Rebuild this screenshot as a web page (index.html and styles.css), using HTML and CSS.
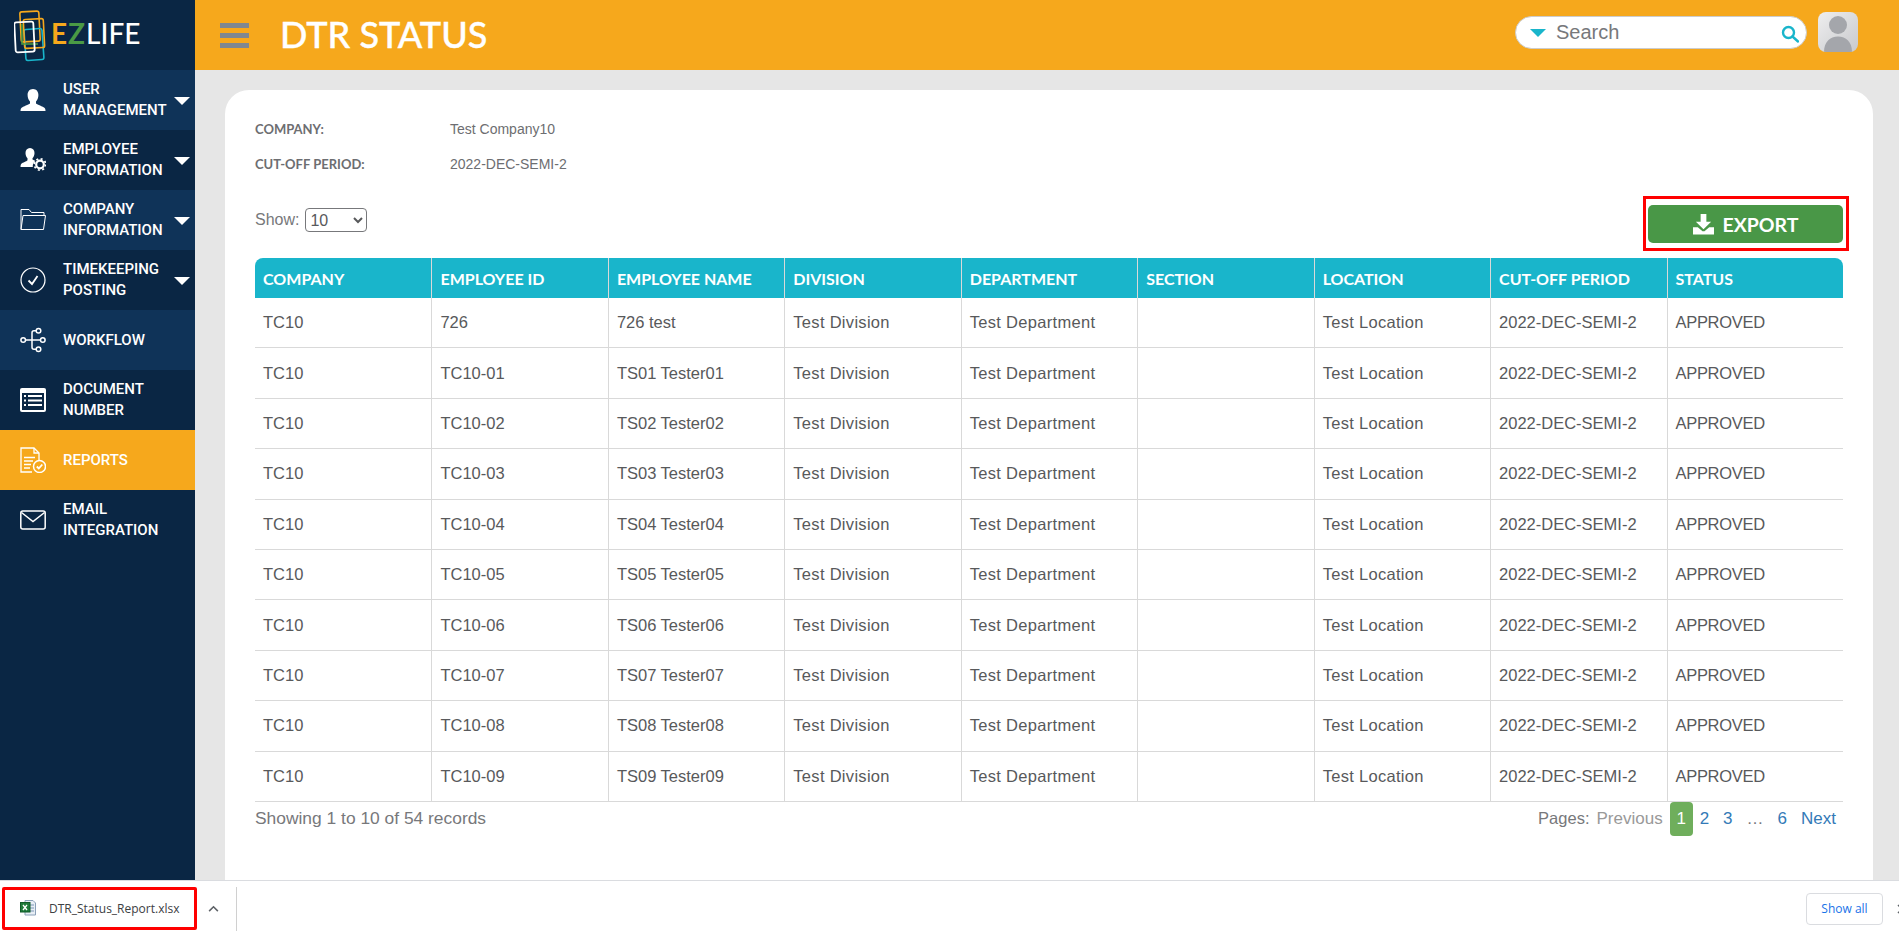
FILE: index.html
```html
<!DOCTYPE html>
<html lang="en">
<head>
<meta charset="utf-8">
<title>DTR Status</title>
<link rel="stylesheet" href="styles.css">
</head>
<body>
<div class="app">
  <aside class="sidebar">
    <div class="logo">
      <svg class="logo-mark" viewBox="0 0 36 52" width="36" height="52" fill="none" stroke-width="1.6">
        <rect x="6.500" y="1.500" width="19" height="30" rx="2" stroke="#f6a81c" transform="rotate(-3 16 16)"/>
        <rect x="11" y="19" width="18" height="31" rx="2" stroke="#19b5cb" transform="rotate(-4 20 35)"/>
        <rect x="10" y="9" width="20" height="29" rx="2" stroke="#f6a81c" transform="rotate(-3 20 24)"/>
        <path d="M8 14v20h16" stroke="#4a9a45"/>
        <rect x="1" y="12" width="19" height="30" rx="2" stroke="#fff" stroke-width="1.8" transform="rotate(-3 10 27)"/>
      </svg>
      <span class="logo-text"><span class="logo-e">E</span><span class="logo-z">Z</span>LIFE</span>
    </div>
    <nav class="nav">
      <a class="nav-item alt">
        <svg class="nav-icon" viewBox="0 0 26 26"><path d="M13 2c3.600 0 5.400 2.800 5.400 6 0 2.600-1 5-2.400 6.400v1.800c0 1 5 2.400 8 4.200 1 .6 1.500 1.600 1.500 3.600H.5c0-2 .5-3 1.500-3.600 3-1.800 8-3.200 8-4.200v-1.800C8.600 13 7.600 10.600 7.600 8c0-3.200 1.800-6 5.400-6z" fill="#fff"/></svg>
        <span class="nav-label">USER<br>MANAGEMENT</span><span class="caret"></span>
      </a>
      <a class="nav-item">
        <svg class="nav-icon" viewBox="0 0 26 26"><path d="M10 1c2.900 0 4.500 2.200 4.500 5 0 2-.8 4-2 5.200v1.300c1 .5 2 .9 3 1.400-2 1.200-3 3.300-2.700 6.100H.5c0-2.400.5-3.200 1.500-3.800 2-1.200 5.500-2.300 5.500-3.300v-1.700C6.300 10 5.500 8 5.500 6c0-2.800 1.600-5 4.500-5z" fill="#fff"/><circle cx="20" cy="17.500" r="3.800" fill="none" stroke="#fff" stroke-width="2.200"/><circle cx="20" cy="17.500" r="5.700" fill="none" stroke="#fff" stroke-width="1.800" stroke-dasharray="2 2.470"/></svg>
        <span class="nav-label">EMPLOYEE<br>INFORMATION</span><span class="caret"></span>
      </a>
      <a class="nav-item alt">
        <svg class="nav-icon" viewBox="0 0 26 26" fill="none" stroke="#fff" stroke-width="1"><path d="M1 22.500V2.500h8l2.500 3H24v3"/><path d="M1 22.500 3 8.500h22.500L23.500 22.500z"/></svg>
        <span class="nav-label">COMPANY<br>INFORMATION</span><span class="caret"></span>
      </a>
      <a class="nav-item">
        <svg class="nav-icon" viewBox="0 0 26 26" fill="none" stroke="#fff"><circle cx="13" cy="13" r="12" stroke-width="1.200"/><path d="M8.500 13.500 12 17l5.500-8" stroke-width="1.800"/></svg>
        <span class="nav-label">TIMEKEEPING<br>POSTING</span><span class="caret"></span>
      </a>
      <a class="nav-item alt">
        <svg class="nav-icon" viewBox="0 0 26 26" fill="none" stroke="#fff" stroke-width="1.500"><circle cx="3.200" cy="13" r="2.300"/><circle cx="18.500" cy="3.800" r="2.300"/><circle cx="22.800" cy="13" r="2.300"/><circle cx="18.500" cy="22.200" r="2.300"/><path d="M5.500 13h15M16.200 3.800h-2.200a2 2 0 0 0-2 2v14.400a2 2 0 0 0 2 2h2.200"/></svg>
        <span class="nav-label">WORKFLOW</span>
      </a>
      <a class="nav-item">
        <svg class="nav-icon" viewBox="0 0 26 26"><rect x="0" y="1" width="26" height="24" rx="2" fill="#fff"/><rect x="2" y="6" width="22" height="17" fill="#0a2644"/><path d="M4 9h2M8 9h14M4 13.500h2M8 13.500h14M4 18h2M8 18h14" stroke="#fff" stroke-width="1.800"/></svg>
        <span class="nav-label">DOCUMENT<br>NUMBER</span>
      </a>
      <a class="nav-item active">
        <svg class="nav-icon" viewBox="0 0 26 26" fill="none" stroke="#fff" stroke-width="1.300"><path d="M12 25H1V1h13l5 5v8"/><path d="M14 1v5h5"/><path d="M4 10.500h11M4 14h9M4 17.500h7M4 21h6"/><circle cx="19.500" cy="19.500" r="6" fill="#f6a81c" stroke-width="1.500"/><path d="M16.800 19.500l2 2 3.500-4" stroke-width="1.800"/></svg>
        <span class="nav-label">REPORTS</span>
      </a>
      <a class="nav-item">
        <svg class="nav-icon" viewBox="0 0 26 26" fill="none" stroke="#fff" stroke-width="1.500"><rect x=".8" y="4" width="24.400" height="18" rx="2"/><path d="M1.500 5.500 13 14.500 24.500 5.500"/></svg>
        <span class="nav-label">EMAIL<br>INTEGRATION</span>
      </a>
    </nav>
  </aside>

  <div class="main">
    <header class="topbar">
      <div class="hamburger"><i></i><i></i><i></i></div>
      <h1 class="title">DTR STATUS</h1>
      <div class="search">
        <span class="search-caret"></span>
        <span class="search-text">Search</span>
        <svg class="search-icon" viewBox="0 0 18 18" width="18" height="18" fill="none" stroke="#19b5cb" stroke-width="2.400"><circle cx="7.500" cy="7.500" r="5.500"/><path d="M11.500 11.500 17 16.500" stroke-linecap="round"/></svg>
      </div>
      <div class="avatar">
        <svg viewBox="0 0 40 40" width="40" height="40"><circle cx="20" cy="13" r="9" fill="#a4a6ab"/><path d="M6 40c0-10 6-15.500 14-15.500S34 30 34 40z" fill="#a4a6ab"/></svg>
      </div>
    </header>

    <main class="content">
      <section class="card">
        <dl class="info">
          <div class="info-row"><dt>COMPANY:</dt><dd>Test Company10</dd></div>
          <div class="info-row"><dt>CUT-OFF PERIOD:</dt><dd>2022-DEC-SEMI-2</dd></div>
        </dl>
        <div class="toolbar">
          <label class="show">Show:
            <select class="show-select"><option>10</option></select>
          </label>
          <div class="export-mark">
            <button class="export">
              <svg viewBox="0 0 22 22" width="21" height="21"><path d="M8 0h6v8h5l-8 8-8-8h5z" fill="#fff"/><path d="M0 14h5l5 4h2l5-4h5v7.500H0z" fill="#fff"/></svg>
              EXPORT
            </button>
          </div>
        </div>
        <table class="grid">
          <thead>
            <tr><th>COMPANY</th><th>EMPLOYEE ID</th><th>EMPLOYEE NAME</th><th>DIVISION</th><th>DEPARTMENT</th><th>SECTION</th><th>LOCATION</th><th>CUT-OFF PERIOD</th><th>STATUS</th></tr>
          </thead>
          <tbody>
            <tr><td>TC10</td><td>726</td><td>726 test</td><td>Test Division</td><td>Test Department</td><td></td><td>Test Location</td><td>2022-DEC-SEMI-2</td><td>APPROVED</td></tr>
            <tr><td>TC10</td><td>TC10-01</td><td>TS01 Tester01</td><td>Test Division</td><td>Test Department</td><td></td><td>Test Location</td><td>2022-DEC-SEMI-2</td><td>APPROVED</td></tr>
            <tr><td>TC10</td><td>TC10-02</td><td>TS02 Tester02</td><td>Test Division</td><td>Test Department</td><td></td><td>Test Location</td><td>2022-DEC-SEMI-2</td><td>APPROVED</td></tr>
            <tr><td>TC10</td><td>TC10-03</td><td>TS03 Tester03</td><td>Test Division</td><td>Test Department</td><td></td><td>Test Location</td><td>2022-DEC-SEMI-2</td><td>APPROVED</td></tr>
            <tr><td>TC10</td><td>TC10-04</td><td>TS04 Tester04</td><td>Test Division</td><td>Test Department</td><td></td><td>Test Location</td><td>2022-DEC-SEMI-2</td><td>APPROVED</td></tr>
            <tr><td>TC10</td><td>TC10-05</td><td>TS05 Tester05</td><td>Test Division</td><td>Test Department</td><td></td><td>Test Location</td><td>2022-DEC-SEMI-2</td><td>APPROVED</td></tr>
            <tr><td>TC10</td><td>TC10-06</td><td>TS06 Tester06</td><td>Test Division</td><td>Test Department</td><td></td><td>Test Location</td><td>2022-DEC-SEMI-2</td><td>APPROVED</td></tr>
            <tr><td>TC10</td><td>TC10-07</td><td>TS07 Tester07</td><td>Test Division</td><td>Test Department</td><td></td><td>Test Location</td><td>2022-DEC-SEMI-2</td><td>APPROVED</td></tr>
            <tr><td>TC10</td><td>TC10-08</td><td>TS08 Tester08</td><td>Test Division</td><td>Test Department</td><td></td><td>Test Location</td><td>2022-DEC-SEMI-2</td><td>APPROVED</td></tr>
            <tr><td>TC10</td><td>TC10-09</td><td>TS09 Tester09</td><td>Test Division</td><td>Test Department</td><td></td><td>Test Location</td><td>2022-DEC-SEMI-2</td><td>APPROVED</td></tr>
          </tbody>
        </table>
        <div class="table-foot">
          <span class="records">Showing 1 to 10 of 54 records</span>
          <div class="pager">
            <span class="pager-label">Pages:</span>
            <span class="pager-off">Previous</span>
            <span class="pager-now">1</span>
            <a class="pager-link">2</a>
            <a class="pager-link">3</a>
            <span class="pager-dots">…</span>
            <a class="pager-link">6</a>
            <a class="pager-link">Next</a>
          </div>
        </div>
      </section>
    </main>
  </div>
</div>

<footer class="downloads">
  <div class="dl-item">
    <svg class="dl-icon" viewBox="0 0 16 16" width="16" height="16"><path d="M5 .5h8l2.500 2.500v12H5z" fill="#e8eef5" stroke="#8aa0b8"/><path d="M9 5h5M9 8h5M9 11h5" stroke="#7a96b5"/><rect x=".5" y="2.500" width="9.500" height="9.500" fill="#1f7a3a" stroke="#0f5a28"/><path d="M3 5l4 5M7 5l-4 5" stroke="#fff" stroke-width="1.300"/></svg>
    <span class="dl-name">DTR_Status_Report.xlsx</span>
  </div>
  <svg class="dl-chevron" viewBox="0 0 12 8" width="11" height="7" fill="none" stroke="#5f6368" stroke-width="1.800"><path d="M1 7l5-5 5 5"/></svg>
  <span class="dl-divider"></span>
  <button class="show-all">Show all</button>
  <svg class="dl-close" viewBox="0 0 10 10" width="10" height="10" fill="none" stroke="#5f6368" stroke-width="1.500"><path d="M1 1l8 8M9 1l-8 8"/></svg>
</footer>
</body>
</html>
```

FILE: styles.css
```css
* { box-sizing: border-box; }
html, body { margin: 0; height: 100%; overflow: hidden; }
body {
  display: flex;
  flex-direction: column;
  height: 936px;
  font-family: "Liberation Sans", Arial, sans-serif;
  color: #58595b;
  background: #fff;
}
.app { display: flex; height: 880px; }

/* sidebar */
.sidebar { width: 195px; flex: none; background: #0a2644; }
.logo { height: 70px; display: flex; align-items: center; padding: 2px 0 0 14px; }
.logo-mark { flex: none; margin-top: -1px; }
.logo-text {
  font-family: Lato, sans-serif;
  font-size: 28px;
  line-height: 1;
  color: #fff;
  font-weight: 500;
  margin-left: 1px;
  margin-top: -7px;
}
.logo-e { color: #f6a81c; font-weight: 700; margin-right: 1px; }
.logo-z { color: #4a9a45; font-weight: 700; margin-right: 1px; }
.nav { display: flex; flex-direction: column; }
.nav-item {
  height: 60px;
  display: flex;
  align-items: center;
  padding-left: 20px;
  color: #fff;
  background: #0a2644;
  position: relative;
}
.nav-item.alt { background: #0f3358; }
.nav-item.active { background: #f6a81c; }
.nav-icon { width: 26px; height: 26px; flex: none; }
.nav-label {
  margin-left: 17px;
  font-family: Roboto, sans-serif;
  font-size: 15px;
  font-weight: 500;
  line-height: 21px;
}
.caret {
  position: absolute;
  right: 5px;
  top: 27px;
  width: 0;
  height: 0;
  border-left: 8px solid transparent;
  border-right: 8px solid transparent;
  border-top: 8px solid #fff;
}

/* top bar */
.main { flex: 1; display: flex; flex-direction: column; min-width: 0; background: #e6e6e6; }
.topbar {
  height: 70px;
  flex: none;
  background: #f6a81c;
  display: flex;
  align-items: center;
  padding-left: 25px;
}
.hamburger { width: 29px; display: flex; flex-direction: column; gap: 5px; }
.hamburger i { display: block; height: 5px; background: #7f8790; }
.title {
  margin: -2px 0 0 31px;
  font-family: Lato, sans-serif;
  font-size: 36px;
  font-weight: 500;
  color: #fff;
  -webkit-text-stroke: .4px #fff;
}
.search {
  margin-left: auto;
  width: 292px;
  height: 33px;
  margin-top: -5px;
  background: #fff;
  border: 1px solid #ccc;
  border-radius: 17px;
  display: flex;
  align-items: center;
  padding: 0 7px 0 14px;
}
.search-caret {
  width: 0;
  height: 0;
  border-left: 8px solid transparent;
  border-right: 8px solid transparent;
  border-top: 8px solid #19b5cb;
  flex: none;
}
.search-text { margin-left: 10px; font-size: 20px; color: #77787b; }
.search-icon { margin-left: auto; margin-top: 2px; }
.avatar {
  width: 40px;
  height: 40px;
  margin: -6px 41px 0 11px;
  border-radius: 8px;
  overflow: hidden;
  background: linear-gradient(135deg, #eeeeef, #c8c9cc);
}
.avatar svg { display: block; }

/* card */
.content { flex: 1; padding: 20px 26px 0 30px; min-height: 0; }
.card {
  height: 100%;
  background: #fff;
  border-radius: 24px 24px 0 0;
  padding: 21px 30px 0 30px;
}
.info { margin: 0; }
.info-row { display: flex; align-items: center; height: 35px; font-size: 14px; color: #6d6e71; }
.info-row dt { width: 195px; font-family: Lato, sans-serif; font-weight: 700; font-size: 13px; }
.info-row dd { margin: 0; }
.toolbar { display: flex; justify-content: space-between; align-items: flex-start; margin-top: 17px; height: 50px; }
.show { font-size: 16px; color: #77787b; margin-top: 10px; display: flex; align-items: center; gap: 6px; }
.show-select {
  width: 62px;
  height: 24px;
  font-size: 16px;
  font-family: "Liberation Sans", sans-serif;
  color: #58595b;
  background: #fff;
  border: 1px solid #77787b;
  border-radius: 4px;
}
.export-mark { border: 3px solid #f00; padding: 6px 3px 5px 2px; margin: -2px -6px 0 0; }
.export {
  width: 195px;
  height: 38px;
  display: flex;
  align-items: center;
  justify-content: center;
  gap: 9px;
  background: #499747;
  color: #fff;
  border: 0;
  border-radius: 5px;
  font-family: Lato, sans-serif;
  font-size: 19.500px;
  font-weight: 700;
}

/* table */
.grid { width: 100%; table-layout: fixed; border-collapse: separate; border-spacing: 0; font-size: 16.500px; margin-top: 10px; }
.grid th {
  height: 40px;
  padding: 0 8px;
  background: #19b5cb;
  color: #fff;
  font-family: Lato, sans-serif;
  font-size: 16px;
  font-weight: 700;
  text-align: left;
  border-left: 1px solid #d9d9d9;
}
.grid th:first-child { border-left: 0; border-top-left-radius: 8px; }
.grid th:last-child { border-top-right-radius: 8px; }
.grid td {
  height: 50.400px;
  padding: 0 8px;
  color: #58595b;
  border-left: 1px solid #d9d9d9;
  border-bottom: 1px solid #d9d9d9;
}
.grid td:first-child { border-left: 0; }
.grid td:nth-child(4), .grid td:nth-child(5), .grid td:nth-child(7) { letter-spacing: .3px; }
.grid td:last-child { letter-spacing: -.3px; }
.table-foot { display: flex; justify-content: space-between; align-items: flex-start; }
.records { font-size: 17.400px; color: #77787b; margin-top: 6px; }
.pager { display: flex; align-items: center; height: 34px; font-size: 17px; }
.pager-label { color: #77787b; font-size: 16.500px; }
.pager-off { color: #999; padding: 0 7px; }
.pager-now {
  width: 23px;
  height: 34px;
  display: flex;
  align-items: center;
  justify-content: center;
  background: #6fae5c;
  color: #fff;
  border-radius: 4px;
}
.pager-link { color: #337ab7; padding: 0 7px; }
.pager-dots { color: #77787b; padding: 0 7px; }

/* downloads bar */
.downloads {
  height: 56px;
  flex: none;
  background: #fff;
  border-top: 1px solid #dadce0;
  display: flex;
  align-items: center;
  padding: 0 0 0 2px;
  overflow: hidden;
}
.dl-item {
  width: 195px;
  height: 43px;
  border: 3px solid #f00;
  border-radius: 2px;
  display: flex;
  align-items: center;
  padding-left: 15px;
}
.dl-icon { flex: none; margin-top: -2px; }
.dl-name { margin-left: 13px; font-family: "Open Sans", sans-serif; font-size: 12px; color: #3c4043; white-space: nowrap; }
.dl-chevron { margin-left: 11px; flex: none; }
.dl-divider { width: 1px; height: 44px; background: #d0d0d0; margin-left: 17px; flex: none; }
.show-all {
  margin-left: auto;
  width: 77px;
  height: 32px;
  border: 1px solid #dadce0;
  border-radius: 4px;
  background: #fff;
  color: #1a73e8;
  font-family: "Open Sans", sans-serif;
  font-size: 12px;
  padding: 0;
  flex: none;
}
.dl-close { margin-left: 14px; margin-right: -8px; flex: none; }
```
